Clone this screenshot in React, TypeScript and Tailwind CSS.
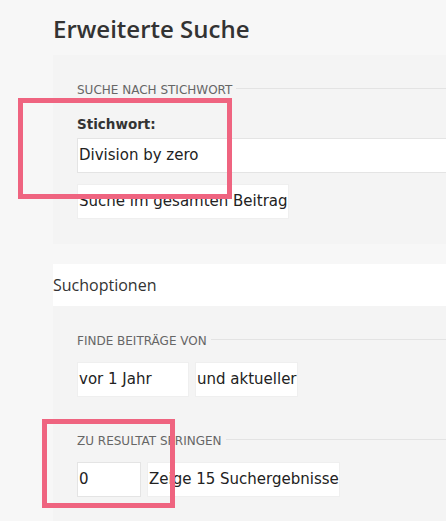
import React from "react";

const body = { fontFamily: '"DejaVu Sans", Verdana, sans-serif' };
const head = { fontFamily: '"Open Sans", "Noto Sans", sans-serif' };

function Legend({ text }: { text: string }) {
  return (
    <div className="flex items-start">
      <span className="text-[12px] leading-[15px] text-[#666] uppercase pr-1" style={body}>
        {text}
      </span>
      <div className="flex-1 h-px bg-[#e3e3e3] mt-[5px]" />
    </div>
  );
}

function Box({ text, w, light }: { text: string; w?: string; light?: boolean }) {
  return (
    <div
      className={`h-[35px] flex items-center bg-white border ${light ? "border-[#efefef]" : "border-[#e4e4e4]"} pl-px text-[15px] text-[#222] whitespace-nowrap ${w ?? ""}`}
      style={body}
    >
      {text}
    </div>
  );
}

export default function App() {
  return (
    <div className="relative w-[446px] h-[521px] overflow-hidden bg-[#f7f7f7]">
      <div className="w-[700px] pl-[53px]">
        <h1 className="pt-[13px] text-[24px] leading-[32px] text-[#333] font-semibold" style={head}>
          Erweiterte Suche
        </h1>
        <div className="mt-[10px] bg-[#f4f4f4] pl-[24px] pt-[28px] pb-[25px]">
          <Legend text="Suche nach Stichwort" />
          <div className="mt-[18px] text-[13.5px] leading-[16px] font-bold text-[#333]" style={body}>
            Stichwort:
          </div>
          <div className="mt-[6px]">
            <Box text="Division by zero" w="w-[500px]" />
          </div>
          <div className="mt-[11px] flex">
            <Box text="Suche im gesamten Beitrag" light />
          </div>
        </div>
        <div className="mt-[20px] h-[42px] bg-white flex items-center text-[16px] text-[#333]" style={head}>
          Suchoptionen
        </div>
        <div className="bg-[#f4f4f4] pl-[24px] pt-[28px] pb-[40px]">
          <Legend text="Finde Beiträge von" />
          <div className="mt-[13px] flex gap-[6px]">
            <Box text="vor 1 Jahr" w="w-[112px]" light />
            <Box text="und aktueller" light />
          </div>
          <div className="mt-[37px]">
            <Legend text="Zu Resultat springen" />
          </div>
          <div className="mt-[13px] flex gap-[6px]">
            <Box text="0" w="w-[64px]" />
            <Box text="Zeige 15 Suchergebnisse" light />
          </div>
        </div>
      </div>
      <div className="absolute left-[18px] top-[98px] w-[214px] h-[101px] border-[5px] border-[#ef6480]" />
      <div className="absolute left-[42px] top-[419px] w-[133px] h-[89px] border-[5px] border-[#ef6480]" />
    </div>
  );
}
